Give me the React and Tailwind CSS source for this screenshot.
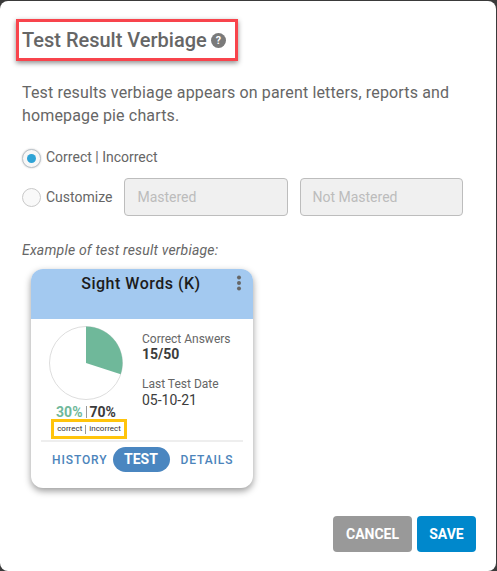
const roboto = { fontFamily: "Roboto, 'Liberation Sans', sans-serif" };

export default function App() {
  return (
    <div className="w-[497px] h-[571px] bg-[#3a3a3a] pt-px pr-px overflow-hidden" style={roboto}>
      <div className="relative h-[570px] w-[496px] bg-white rounded-lg flex flex-col px-[22px] text-[#666666]">
        <div className="mt-[18px] h-[42px] -ml-[6px] w-[222px] border-[3px] border-[#f8444c] shadow-[0_2px_5px_rgba(0,0,0,0.45)] flex items-center pl-[4px] gap-[4px]">
          <span className="-ml-px text-[20px] font-medium leading-none text-[#666666]">Test Result Verbiage</span>
          <svg width="15" height="15" viewBox="0 0 24 24" className="mt-px">
            <circle cx="12" cy="12" r="12" fill="#7a7a7a" />
            <text x="12" y="18" textAnchor="middle" fontSize="17" fontWeight="700" fill="#ffffff" fontFamily="Roboto, sans-serif">?</text>
          </svg>
        </div>
        <p className="mt-[20px] text-[16px] leading-[23px] tracking-[0.15px] text-[#666666] w-[450px]">
          Test results verbiage appears on parent letters, reports and homepage pie charts.
        </p>
        <div className="mt-[21px] flex items-center h-[20px] gap-[5px]">
          <span className="w-[19px] h-[19px] rounded-full border border-[#b9c2c9] bg-[#f7f7f7] flex items-center justify-center shadow-[0_0_2px_rgba(0,0,0,0.25)]">
            <span className="w-[9px] h-[9px] rounded-full bg-[#2ea3d6]" />
          </span>
          <span className="text-[14px] text-[#666666] leading-none -mt-[2px]">Correct | Incorrect</span>
        </div>
        <div className="mt-[10px] flex items-center h-[38px]">
          <span className="w-[19px] h-[19px] rounded-full border border-[#c9c9c9] bg-[#f9f9f9]" />
          <span className="ml-[5px] text-[14px] text-[#666666] leading-none">Customize</span>
          <div className="ml-[12px] w-[164px] h-[38px] rounded border border-[#bdbdbd] bg-[#f0f0f0] flex items-center pl-[12px] text-[14px] text-[#bcbcbc]">Mastered</div>
          <div className="ml-[12px] w-[163px] h-[38px] rounded border border-[#bdbdbd] bg-[#f0f0f0] flex items-center pl-[11px] text-[14px] text-[#bcbcbc]">Not Mastered</div>
        </div>
        <p className="mt-[24px] text-[14px] italic leading-[20px] tracking-[0.2px] text-[#666666]">Example of test result verbiage:</p>
        <div className="mt-[9px] ml-[9px] w-[222px] h-[219px] rounded-[12px] bg-white shadow-[0_3px_7px_rgba(0,0,0,0.4)] flex flex-col overflow-hidden">
          <div className="relative h-[50px] shrink-0 bg-[#a3c9f0] flex justify-center">
            <span className="mt-[6px] -ml-[2px] text-[16px] font-medium leading-[17px] tracking-[0.5px] text-[#1c1c1c]">Sight Words (K)</span>
            <svg width="6" height="16" viewBox="0 0 6 16" className="absolute right-[11px] top-[6px]">
              <circle cx="3" cy="2.5" r="2" fill="#666666" />
              <circle cx="3" cy="8" r="2" fill="#666666" />
              <circle cx="3" cy="13.5" r="2" fill="#666666" />
            </svg>
          </div>
          <div className="flex pt-[6px]">
            <div className="ml-[17px] w-[76px] flex flex-col items-center">
              <svg width="76" height="76" viewBox="0 0 76 76">
                <circle cx="38" cy="38" r="36.5" fill="#ffffff" stroke="#dddddd" strokeWidth="1" />
                <path d="M38 38 L38 1.5 A36.5 36.5 0 0 1 72.7 49.3 Z" fill="#6fb89a" />
              </svg>
              <div className="mt-[3px] flex items-center text-[14px] font-bold leading-[16px] whitespace-nowrap">
                <span className="text-[#6fb89a]">30%</span>
                <span className="mx-[3px] w-px h-[12px] bg-[#999999]" />
                <span className="text-[#3c3c3c]">70%</span>
              </div>
            </div>
            <div className="ml-[18px] mt-[7px] flex flex-col">
              <span className="text-[12px] leading-[14px] text-[#666666]">Correct Answers</span>
              <span className="text-[14px] font-bold leading-[16px] text-[#3c3c3c]">15/50</span>
              <span className="mt-[15px] text-[12px] leading-[14px] text-[#666666]">Last Test Date</span>
              <span className="mt-px text-[14px] leading-[17px] text-[#3c3c3c]">05-10-21</span>
            </div>
          </div>
          <div className="-mt-px ml-[20px] w-[76px] h-[20px] border-[3px] border-[#ffc40c] flex items-center justify-center whitespace-nowrap text-[8px] font-normal leading-none text-[#333333]">
            correct<span className="mx-[3px] w-px h-[9px] bg-[#999999]" />incorrect
          </div>
          <div className="mt-px mx-[10px] h-[2px] bg-[#eeeeee]" />
          <div className="mt-[5px] flex items-center pl-[21px] text-[12px] font-medium tracking-[0.9px] text-[#4c84bb]">
            <span>HISTORY</span>
            <span className="ml-[6px] -translate-x-px w-[57px] h-[25px] rounded-full bg-[#4a86c0] text-white text-[14px] font-bold tracking-normal flex items-center justify-center">TEST</span>
            <span className="ml-[10px]">DETAILS</span>
          </div>
        </div>
        <div className="absolute right-[20px] bottom-[19px] flex gap-[5px]">
          <button className="w-[79px] h-[36px] rounded bg-[#999999] text-white text-[14px] font-bold">CANCEL</button>
          <button className="w-[59px] h-[36px] rounded bg-[#0088cc] text-white text-[14px] font-bold">SAVE</button>
        </div>
      </div>
    </div>
  );
}
